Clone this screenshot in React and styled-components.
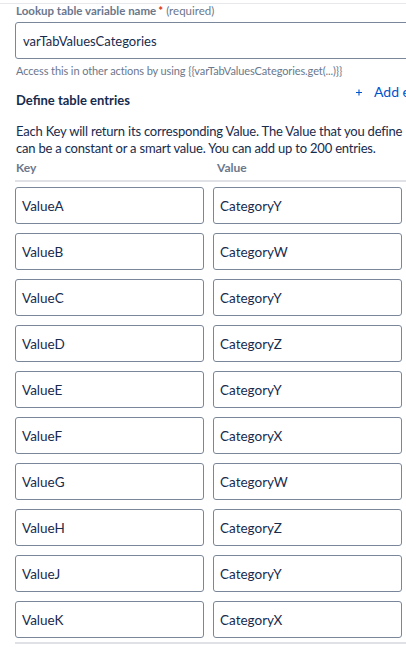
import React from "react";
import styled, { createGlobalStyle } from "styled-components";

const Global = createGlobalStyle`
  html, body { margin: 0; padding: 0; background: #fff; overflow: hidden; }
  body { font-family: "Lato", "Noto Sans", sans-serif; color: #172b4d; }
`;

const Page = styled.div`
  width: 406px;
  height: 647px;
  overflow: hidden;
  box-sizing: border-box;
  padding-top: 3px;
`;

const TopRule = styled.div`
  height: 1px;
  background: #e6e8ec;
`;

const Content = styled.div`
  padding-left: 15px;
  display: flex;
  flex-direction: column;
`;

const Label = styled.div`
  font-size: 11.5px;
  font-weight: 700;
  color: #6b778c;
  line-height: 14px;
  padding-left: 1px;
  white-space: nowrap;
`;

const Req = styled.span`
  color: #de350b;
  margin-left: 2px;
`;

const ReqText = styled.span`
  font-weight: 400;
  color: #6b778c;
  margin-left: 3px;
`;

const BigInput = styled.div`
  margin-top: 4px;
  width: 420px;
  height: 37px;
  box-sizing: border-box;
  border: 1px solid #7a869a;
  border-radius: 3px;
  display: flex;
  align-items: center;
  padding-left: 7px;
  font-size: 13px;
  color: #172b4d;
`;

const Helper = styled.div`
  margin-top: 5px;
  font-size: 11px;
  letter-spacing: -0.1px;
  color: #6b778c;
  line-height: 14px;
  padding-left: 1px;
  white-space: nowrap;
`;

const SectionHead = styled.div`
  display: flex;
  justify-content: space-between;
  align-items: flex-start;
  width: 420px;
`;

const SectionTitle = styled.div`
  font-size: 13px;
  font-weight: 700;
  color: #172b4d;
  padding-left: 1px;
  margin-top: 13px;
  line-height: 18px;
`;

const AddButton = styled.div`
  display: flex;
  align-items: center;
  gap: 12px;
  color: #0052cc;
  font-size: 14px;
  line-height: 18px;
  margin-top: 5px;
  width: 79px;
  white-space: nowrap;
`;

const Para = styled.p`
  margin: 14px 0 0 0;
  font-size: 13px;
  letter-spacing: -0.2px;
  line-height: 17px;
  color: #172b4d;
  padding-left: 1px;
  width: 400px;
  white-space: nowrap;
`;

const HeaderRow = styled.div`
  display: grid;
  grid-template-columns: 189px 189px;
  column-gap: 9px;
  margin-top: 3px;
  padding-bottom: 4px;
  border-bottom: 2px solid #dfe1e6;
  width: 400px;
`;

const ColHead = styled.div`
  font-size: 12px;
  font-weight: 700;
  color: #6b778c;
  line-height: 16px;
  padding-left: ${(p) => p.$pl || 1}px;
`;

const Rows = styled.div`
  display: flex;
  flex-direction: column;
  gap: 9px;
  margin-top: 5px;
  padding-bottom: 4px;
  border-bottom: 2px solid #dfe1e6;
  width: 400px;
`;

const Row = styled.div`
  display: grid;
  grid-template-columns: 189px 189px;
  column-gap: 9px;
`;

const Cell = styled.div`
  height: 37px;
  box-sizing: border-box;
  border: 1px solid #7a869a;
  border-radius: 3px;
  display: flex;
  align-items: center;
  padding-left: 6px;
  font-size: 13.5px;
  color: #172b4d;
`;

const entries = [
  ["ValueA", "CategoryY"],
  ["ValueB", "CategoryW"],
  ["ValueC", "CategoryY"],
  ["ValueD", "CategoryZ"],
  ["ValueE", "CategoryY"],
  ["ValueF", "CategoryX"],
  ["ValueG", "CategoryW"],
  ["ValueH", "CategoryZ"],
  ["ValueJ", "CategoryY"],
  ["ValueK", "CategoryX"],
];

export default function App() {
  return (
    <>
      <Global />
      <Page>
        <TopRule />
        <Content>
          <Label>
            Lookup table variable name<Req>*</Req>
            <ReqText>(required)</ReqText>
          </Label>
          <BigInput>varTabValuesCategories</BigInput>
          <Helper>Access this in other actions by using {"{{varTabValuesCategories.get(...)}}"}</Helper>
          <SectionHead>
            <SectionTitle>Define table entries</SectionTitle>
            <AddButton>
              <svg width="11" height="11" viewBox="0 0 11 11">
                <path d="M5.5 0v11M0 5.5h11" stroke="#0052cc" strokeWidth="2" fill="none" />
              </svg>
              Add entry
            </AddButton>
          </SectionHead>
          <Para>
            Each Key will return its corresponding Value. The Value that you define
            <br />
            can be a constant or a smart value. You can add up to 200 entries.
          </Para>
          <HeaderRow>
            <ColHead>Key</ColHead>
            <ColHead $pl={4}>Value</ColHead>
          </HeaderRow>
          <Rows>
            {entries.map(([k, v]) => (
              <Row key={k}>
                <Cell>{k}</Cell>
                <Cell>{v}</Cell>
              </Row>
            ))}
          </Rows>
        </Content>
      </Page>
    </>
  );
}
